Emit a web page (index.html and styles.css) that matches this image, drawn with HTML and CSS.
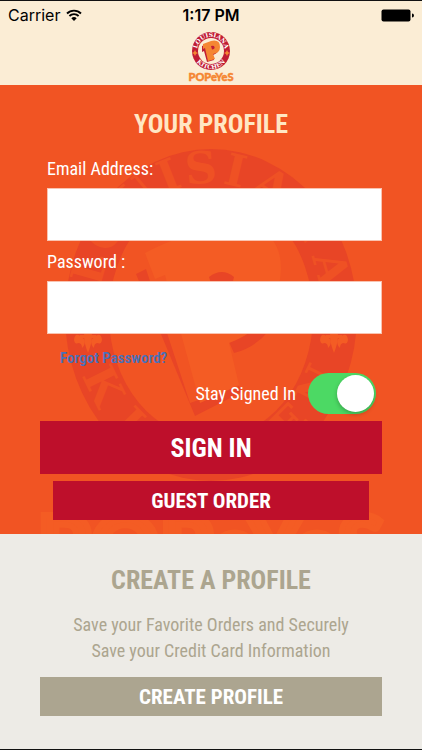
FILE: index.html
```html
<!DOCTYPE html>
<html lang="en">
<head>
<meta charset="utf-8">
<meta name="viewport" content="width=device-width, initial-scale=1">
<title>Popeyes - Your Profile</title>
<link rel="stylesheet" href="styles.css">
</head>
<body>
<header class="top">
  <div class="status">
    <div class="carrier">Carrier
      <svg class="wifi" viewBox="0 0 16 12" aria-hidden="true"><path d="M1 4.500a10 10 0 0 1 14 0M3.400 7a6.600 6.600 0 0 1 9.200 0" fill="none" stroke="#000" stroke-width="1.9"/><path d="M8 12 5.300 9.300a3.800 3.800 0 0 1 5.400 0z"/></svg>
    </div>
    <div class="clock">1:17 PM</div>
    <svg class="battery" viewBox="0 0 33 13" aria-hidden="true"><rect x="0.5" y="0.5" width="29" height="12" rx="2"/><path d="M31 4.500q2 0 2 2t-2 2z"/></svg>
  </div>
  <svg class="logo" viewBox="0 0 46 52" role="img" aria-label="Popeyes Louisiana Kitchen">
    <defs>
      <path id="arcTop" d="M9 19a14 14 0 0 1 28 0"/>
      <path id="arcBottom" d="M5 19a18 18 0 0 0 36 0"/>
    </defs>
    <circle cx="23" cy="19" r="19" fill="#c01c34"/>
    <circle cx="23" cy="19" r="13" fill="#fbedd5"/>
    <text class="logo-ring"><textPath href="#arcTop" startOffset="50%">LOUISIANA</textPath></text>
    <text class="logo-ring"><textPath href="#arcBottom" startOffset="50%">KITCHEN</textPath></text>
    <path d="M7 18l1 2 2 1-2 1-1 2-1-2-2-1 2-1zM39 18l1 2 2 1-2 1-1 2-1-2-2-1 2-1z" fill="#f58632"/>
    <path d="M14 14 22 11Q31 9 31 15 31 21 25 23L26 28 19 30 16 19 14 20z" fill="#c01c34"/>
    <path d="M15 12 23 9Q32 7 32 15 32 21 25 22L27 27 20 29 17 16 15 17z" fill="#f58632"/>
    <path d="M23 14Q26 13 26.500 15 27 17 24 17.500z" fill="#c01c34"/>
    <text class="logo-name" x="23" y="49">POPeYeS</text>
  </svg>
</header>
<main>
  <section class="profile">
    <svg class="watermark" viewBox="0 0 422 449" aria-hidden="true">
      <defs>
        <path id="bigTop" d="M98 230a112 132 0 0 1 224 0"/>
        <path id="bigBottom" d="M72 230a138 158 0 0 0 276 0"/>
      </defs>
      <ellipse class="dark" cx="211" cy="230" rx="146" ry="166"/>
      <ellipse class="base" cx="211" cy="230" rx="102" ry="124"/>
      <text class="ring-text"><textPath href="#bigTop"><tspan x="43 80 121 155 184 214 249 295 341">LOUISIANA</tspan></textPath></text>
      <text class="ring-text"><textPath href="#bigBottom"><tspan x="80 130 180 232 284 334 385">KITCHEN</tspan></textPath></text>
      <g id="fleur" class="light"><path d="M88 238q8 10 0 30-8-20 0-30zM84 254q-9-9-10 1 1 5 4 3 4 0 4 5 4-3 2-9zM92 254q9-9 10 1-1 5-4 3-4 0-4 5-4-3-2-9z"/><path d="M80 250h16v3H80z"/></g>
      <use href="#fleur" x="246"/>
      <path class="dark" d="M136 189 146 184 190 318 239 301 242 307 195 331zM229 257Q262 248 278 212L282 224Q266 260 234 268z"/>
      <path class="light" d="M145 168Q184 147 232 140 281 140 281 184 278 240 229 258L239 300 200 318 165 190 155 194z"/>
      <path class="dark" d="M209 192Q222 182 234 192L230 208 214 208z"/>
      <text class="big-name" x="211" y="492">POPeYeS</text>
    </svg>
    <form class="form">
      <h1>YOUR PROFILE</h1>
      <label class="label" for="email">Email Address:</label>
      <input class="field" id="email" type="email">
      <label class="label" for="password">Password :</label>
      <input class="field" id="password" type="password">
      <a class="forgot" href="#">Forgot Password?</a>
      <label class="stay">Stay Signed In <input class="switch" type="checkbox" role="switch" checked></label>
      <button class="button primary" type="button">SIGN IN</button>
      <button class="button guest" type="button">GUEST ORDER</button>
    </form>
  </section>
  <section class="create">
    <h2>CREATE A PROFILE</h2>
    <p>Save your Favorite Orders and Securely<br>Save your Credit Card Information</p>
    <button class="button muted" type="button">CREATE PROFILE</button>
  </section>
</main>
</body>
</html>
```
FILE: styles.css
```css
* { box-sizing: border-box; }
body {
  margin: 0;
  min-height: 100vh;
  background: #edebe6;
  border-top: 1px solid #111;
  border-bottom: 1px solid #111;
  font-family: "Roboto Condensed", "Liberation Sans Narrow", Roboto, sans-serif;
}
h1, h2, p { margin: 0; }

.top { background: #fbedd5; display: flex; flex-direction: column; align-items: center; gap: 3px; padding-bottom: 1px; }
.status {
  width: 100%;
  display: grid;
  grid-template-columns: 1fr auto 1fr;
  align-items: center;
  padding: 0 8px;
  font: 16px/28px Inter, sans-serif;
}
.carrier { display: flex; align-items: center; gap: 6px; }
.wifi { width: 16px; height: 12px; }
.clock { font-weight: 600; }
.battery { width: 33px; height: 13px; justify-self: end; }
.logo { width: 46px; height: 52px; }
.logo-ring { font: bold 6px "DejaVu Serif", serif; fill: #fff; text-anchor: middle; }
.logo-name { font: 900 11px Lato, sans-serif; fill: #f58632; stroke: #f58632; stroke-width: 0.5; text-anchor: middle; }

.profile { position: relative; overflow: hidden; background: #f15423; padding: 20px 40px 14px; }
.watermark { position: absolute; inset: 0; width: 100%; height: 100%; }
.dark { fill: #e84526; }
.light { fill: #f45c24; }
.base { fill: #f15423; }
.ring-text { font: bold 44px "DejaVu Serif", serif; fill: #ef5124; text-anchor: middle; }
.big-name { font: 900 85px Lato, sans-serif; fill: #f45c24; stroke: #f45c24; stroke-width: 6; text-anchor: middle; }

.form { position: relative; display: flex; flex-direction: column; }
h1, h2 { font-size: 26px; line-height: 38px; text-align: center; }
h1 { color: #ffe7c4; margin-bottom: 5px; }
.label { color: #fff; font-size: 18px; line-height: 28px; margin: 7px 7px 5px; }
.field { height: 53px; margin-left: 7px; border: 1px solid #f9c3b0; border-radius: 0; background: #fff; padding: 0 12px; font: inherit; font-size: 18px; }
.forgot { align-self: flex-start; margin: 12px 20px 3px; color: #4a70b8; font-size: 15px; font-weight: 600; line-height: 24px; text-decoration: none; }
.stay { display: flex; align-items: center; align-self: flex-end; gap: 12px; margin-right: 6px; color: #fff; font-size: 18px; }
.switch { appearance: none; display: flex; width: 68px; height: 41px; margin: 0; padding: 2px; background: #4cd964; border-radius: 21px; }
.switch::before { content: ""; width: 37px; height: 37px; border-radius: 50%; background: #fff; box-shadow: 0 2px 4px rgba(0, 0, 0, 0.25); }
.switch:checked { justify-content: flex-end; }
.button { border: 0; padding: 0; color: #fff; background: #be0f2b; font: inherit; font-weight: 700; }
.primary { height: 53px; margin-top: 7px; font-size: 26px; }
.guest { height: 39px; margin: 7px 13px 0; font-size: 21px; }

.create { padding: 27px 40px; display: flex; flex-direction: column; gap: 13px; color: #aca58f; text-align: center; }
p { font-size: 18px; line-height: 26px; }
.muted { height: 39px; font-size: 21px; background: #aca590; }
```
